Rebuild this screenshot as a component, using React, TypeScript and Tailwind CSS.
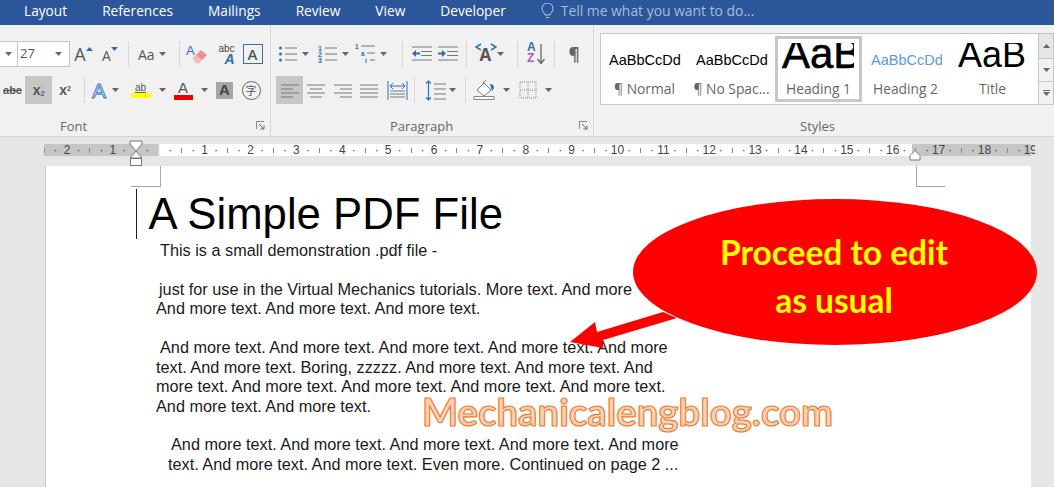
import type { ReactNode } from "react";

const tabs = ["Layout", "References", "Mailings", "Review", "View", "Developer"];

const ui = "font-['Open_Sans',sans-serif]";
const blue = "#2f6fb0";

const Sep = () => <div className="w-px h-[26px] bg-[#d6d6d6] shrink-0" />;

const Caret = ({ className = "" }: { className?: string }) => (
  <svg width="7" height="4" viewBox="0 0 7 4" className={`shrink-0 ${className}`}>
    <path d="M0 0h7L3.500 4z" fill="#666" />
  </svg>
);

const Lines = ({ d, w = 20 }: { d: string; w?: number }) => (
  <svg width={w} height="20" viewBox={`0 0 ${w} 20`}>
    <path d={d} stroke="#777" strokeWidth="1" fill="none" />
  </svg>
);

function Btn({ w, children, active }: { w: string; children: ReactNode; active?: boolean }) {
  return (
    <div className={`${w} h-full shrink-0 flex items-center justify-center ${active ? "bg-[#c6c6c6]" : ""}`}>
      {children}
    </div>
  );
}

const Bullets = () => (
  <svg width="20" height="20" viewBox="0 0 20 20">
    <g fill={blue}>
      <circle cx="2.500" cy="4" r="1.500" />
      <circle cx="2.500" cy="10" r="1.500" />
      <circle cx="2.500" cy="16" r="1.500" />
    </g>
    <path d="M7 4h12M7 10h12M7 16h12" stroke="#777" />
  </svg>
);

const Numbered = () => (
  <svg width="20" height="20" viewBox="0 0 20 20">
    <g fill={blue} fontSize="7" fontWeight="700" fontFamily="'Liberation Sans',sans-serif">
      <text x="0" y="7">1</text>
      <text x="0" y="13">2</text>
      <text x="0" y="19">3</text>
    </g>
    <path d="M7 4h12M7 10h12M7 16h12" stroke="#777" />
  </svg>
);

const Multi = () => (
  <svg width="24" height="22" viewBox="0 0 24 22">
    <g fill={blue} fontSize="6.500" fontWeight="700" fontFamily="'Liberation Sans',sans-serif">
      <text x="0" y="6">1</text>
      <text x="6" y="13">a</text>
      <text x="10" y="20">i</text>
    </g>
    <path d="M6 3h14M12 10h8M15 17h5" stroke="#777" />
  </svg>
);

const Indent = ({ flip }: { flip?: boolean }) => (
  <svg width="20" height="20" viewBox="0 0 20 20">
    <path d="M0 3h20M9 7.500h11M9 11.500h11M0 16h20" stroke="#777" />
    <path
      d={flip ? "M0 8.500h4V6l4 3.500-4 3.500v-2.500H0z" : "M8 8.500H4V6L0 9.500 4 13v-2.500h4z"}
      fill={blue}
    />
  </svg>
);

const Sort = () => (
  <div className="relative w-[18px] h-[22px]">
    <span className="absolute left-0 top-[-3px] text-[12px] font-bold leading-[14px] text-[#2f6fb0] font-['Liberation_Sans',sans-serif]">A</span>
    <span className="absolute left-0 top-[8px] text-[12px] font-bold leading-[14px] text-[#a05fb0] font-['Liberation_Sans',sans-serif]">Z</span>
    <svg width="8" height="20" viewBox="0 0 8 20" className="absolute right-0 top-[1px]">
      <path d="M4 0v19M0.500 15L4 19.500 7.500 15" stroke="#666" strokeWidth="1.300" fill="none" />
    </svg>
  </div>
);

const Eraser = () => (
  <svg width="22" height="22" viewBox="0 0 22 22">
    <text x="0" y="12" fontSize="13" fontFamily="'Liberation Sans',sans-serif" fill={blue}>A</text>
    <path d="M7 15l8-8 6 5-8 8h-3z" fill="#ee8d99" />
    <path d="M7 15l3-3 6 5-3 3h-3z" fill="#f6b8c0" />
  </svg>
);

const Shading = () => (
  <svg width="26" height="22" viewBox="0 0 26 22">
    <path d="M4 11l7-7 7 7-7 6z" fill="#fff" stroke="#777" />
    <path d="M10 4l3-3" stroke="#777" />
    <path d="M17 5c3 0 4 2 4 4l-2 3-1-3z" fill={blue} />
    <rect x="1" y="17.500" width="20" height="3" fill="#fff" stroke="#888" />
  </svg>
);

const Borders = () => (
  <svg width="18" height="18" viewBox="0 0 18 18">
    <path d="M1 1h16v16H1zM9 1v16M1 9h16" stroke="#888" strokeDasharray="1 1" fill="none" />
  </svg>
);

const styleItems = [
  { label: "¶ Normal", sample: "AaBbCcDd", cls: "w-[77px] pl-[5px] text-[14.500px] leading-[20px] text-black" },
  { label: "¶ No Spac...", sample: "AaBbCcDd", cls: "w-[77px] pl-[5px] text-[14.500px] leading-[20px] text-black" },
  { label: "Heading 1", sample: "AaBb", cls: "w-[76px] pl-[4px] text-[42px] leading-[33px] text-black [-webkit-text-stroke:0.600px_#000]", on: true },
  { label: "Heading 2", sample: "AaBbCcDd", cls: "w-[77px] pl-[6px] text-[14.500px] leading-[20px] text-[#5b9bd5]" },
  { label: "Title", sample: "AaB", cls: "pl-[6px] text-[36px] leading-[30px] text-black" },
];

const Launcher = () => (
  <svg width="9" height="9" viewBox="0 0 9 9" className="shrink-0">
    <path d="M0.500 8V0.500H8" stroke="#888" fill="none" />
    <path d="M3 3l5 5M8 4.500V8H4.500" stroke="#666" fill="none" />
  </svg>
);

const GroupLabel = ({ text, launch, className = "" }: { text: string; launch?: boolean; className?: string }) => (
  <div className={`relative h-[20px] mt-auto -mb-px flex items-center text-[13px] text-[#666] ${className}`}>
    {text}
    {launch && (
      <span className="absolute right-[5px] top-[4px]">
        <Launcher />
      </span>
    )}
  </div>
);

// one slot for each quarter centimetre of the ruler
const rulerMarks: string[] = ["|", "·"];
for (let n = -2; n <= 18; n++) {
  rulerMarks.push(n === 0 ? "" : String(Math.abs(n)), "·", "|", "·");
}
rulerMarks.push("19");

function Ruler() {
  return (
    <div className="h-[29px] bg-[#e6e6e6] pt-[7px] pl-[44px] pr-[19px] relative">
      <div className="h-[12px] overflow-hidden flex items-center bg-[linear-gradient(to_right,#c6c6c6_114px,#ffffff_116px,#ffffff_868px,#c6c6c6_868px,#c6c6c6_987px,transparent_987px)] text-[12px] text-[#444] font-['Liberation_Sans',sans-serif]">
        <div className="flex -ml-[5.700px] shrink-0">
          {rulerMarks.map((m, i) => (
            <span key={i} className="w-[11.475px] shrink-0 text-center leading-[12px] whitespace-nowrap flex justify-center">
              {m === "|" ? <span className="w-px h-[5px] mt-[4px] bg-[#888]" /> : m}
            </span>
          ))}
        </div>
      </div>
      {/* indent markers */}
      <svg width="14" height="27" viewBox="0 0 14 27" className="absolute left-[129px] top-[3px]">
        <path d="M1 1h12v3L7 11 1 4zM7 11l6 7H1z" fill="#fff" stroke="#777" />
        <rect x="1.500" y="18.500" width="11" height="7" fill="#fff" stroke="#777" />
      </svg>
      <svg width="12" height="11" viewBox="0 0 12 11" className="absolute left-[909px] top-[13px]">
        <path d="M6 .5l5 5v4.500H1V5.500z" fill="#fff" stroke="#777" />
      </svg>
    </div>
  );
}

export default function App() {
  return (
    <div className="w-[1054px] h-[487px] overflow-hidden relative bg-[#e6e6e6]">
      {/* Title bar tabs */}
      <div className={`${ui} h-[25px] bg-[#2b579a] flex items-center pl-[24px] pb-[2px] gap-[35px] text-[13.700px] text-white`}>
        {tabs.map((t) => (
          <span key={t}>{t}</span>
        ))}
        <span className="flex items-center gap-[7px] text-[#a9bcd8] text-[13.900px]">
          <svg width="13" height="17" viewBox="0 0 13 17" fill="none" stroke="#c4d2e6">
            <path d="M4 12c0-2-3-3-3-6.500a5.500 5.500 0 0 1 11 0C12 9 9 10 9 12zM5 14.500h3" />
          </svg>
          Tell me what you want to do...
        </span>
      </div>

      {/* Ribbon */}
      <div className={`${ui} h-[112px] bg-[#f1f1f1] border-b border-[#d4d4d4] flex`}>
        {/* Font */}
        <div className="w-[271px] shrink-0 border-r border-[#d6d6d6] flex flex-col pt-[16px]">
          <div className="flex items-center h-[26px] text-[#555]">
            <div className="w-[18px] h-full bg-white border-y border-r border-[#c6c6c6] flex items-center justify-center">
              <Caret />
            </div>
            <div className="w-[52px] h-full bg-white border-y border-r border-[#c6c6c6] flex items-center justify-between pl-[2px] pr-[7px] text-[13px]">
              27
              <Caret />
            </div>
            <Btn w="w-[27px]">
              <span className="text-[18px] leading-none">A</span>
              <svg width="7" height="5" viewBox="0 0 7 5" className="mb-[10px]"><path d="M0 4L3.500 0 7 4z" fill={blue} /></svg>
            </Btn>
            <Btn w="w-[26px]">
              <span className="text-[14px] leading-none mt-[3px]">A</span>
              <svg width="7" height="5" viewBox="0 0 7 5" className="mb-[10px]"><path d="M0 0l3.500 4L7 0z" fill={blue} /></svg>
            </Btn>
            <div className="w-[5px]" />
            <Sep />
            <div className="w-[50px] h-full flex items-center pl-[9px]">
              <span className="text-[14px] mr-[4px]">Aa</span>
              <Caret />
            </div>
            <Sep />
            <Btn w="w-[34px]"><Eraser /></Btn>
            <Btn w="w-[25px]">
              <div className="flex flex-col items-end leading-[11px] font-['Liberation_Sans',sans-serif]">
                <span className="text-[10px] text-[#444]">abc</span>
                <span className="text-[14px] font-bold italic text-[#2f6fb0]">A</span>
              </div>
            </Btn>
            <Btn w="w-[27px]">
              <span className="w-[20px] h-[20px] border-[1.500px] border-[#3a6ea5] flex items-center justify-center text-[15px] font-semibold leading-none">A</span>
            </Btn>
          </div>
          <div className="flex items-center h-[28px] mt-[9px] text-[#555] font-['Liberation_Sans',sans-serif]">
            <Btn w="w-[25px]"><span className="text-[11px] font-bold line-through">abc</span></Btn>
            <Btn w="w-[27px]" active>
              <span className="text-[14px] font-bold">x<sub className="text-[7px] text-[#2f6fb0]">2</sub></span>
            </Btn>
            <Btn w="w-[26px]">
              <span className="text-[14px] font-bold">x<sup className="text-[7px]">2</sup></span>
            </Btn>
            <div className="w-[6px]" />
            <Sep />
            <Btn w="w-[41px]">
              <span className="text-[21px] leading-none text-[#dceaf7] [-webkit-text-stroke:1px_#3f7fc1] mr-[6px]">A</span>
              <Caret />
            </Btn>
            <Btn w="w-[44px]">
              <div className="flex flex-col items-center mr-[8px] w-[20px]">
                <span className="text-[10px] leading-[11px] underline decoration-[#666]">ab</span>
                <span className="w-[20px] h-[5px] bg-[#ffff00]" />
              </div>
              <Caret />
            </Btn>
            <Btn w="w-[41px]">
              <div className="flex flex-col items-center mr-[8px] w-[19px]">
                <span className="text-[15px] leading-[14px]">A</span>
                <span className="w-[19px] h-[5px] bg-[#ee0000]" />
              </div>
              <Caret />
            </Btn>
            <Btn w="w-[27px]">
              <span className="w-[17px] h-[17px] bg-[#a6a6a6] flex items-center justify-center text-[15px] font-bold text-[#444]">A</span>
            </Btn>
            <Btn w="w-[26px]">
              <span className="w-[19px] h-[19px] rounded-full border border-[#666] flex items-center justify-center text-[11px] font-['Noto_Sans_CJK_SC',sans-serif]">字</span>
            </Btn>
          </div>
          <GroupLabel text="Font" launch className="pl-[60px]" />
        </div>

        {/* Paragraph */}
        <div className="w-[323px] shrink-0 border-r border-[#d6d6d6] flex flex-col pt-[16px]">
          <div className="flex items-center h-[26px]">
            <Btn w="w-[44px]">
              <Bullets />
              <Caret className="ml-[4px]" />
            </Btn>
            <Btn w="w-[36px]">
              <Numbered />
              <Caret className="ml-[4px]" />
            </Btn>
            <Btn w="w-[40px]">
              <Multi />
              <Caret className="ml-[1px]" />
            </Btn>
            <div className="w-[12px]" />
            <Sep />
            <div className="w-[5px]" />
            <Btn w="w-[27px]"><Indent /></Btn>
            <Btn w="w-[26px]"><Indent flip /></Btn>
            <div className="w-[5px]" />
            <Sep />
            <Btn w="w-[50px]">
              <span className="relative text-[17px] font-bold text-[#555] leading-none mr-[3px]">
                A
                <svg width="22" height="8" viewBox="0 0 22 8" className="absolute left-[-5px] top-[-3px]">
                  <path d="M6 1L1 4l5 3M16 1l5 3-5 3" stroke={blue} strokeWidth="1.500" fill="none" />
                </svg>
              </span>
              <Caret className="ml-[3px]" />
            </Btn>
            <Sep />
            <Btn w="w-[36px]"><Sort /></Btn>
            <Sep />
            <Btn w="w-[38px]">
              <span className="text-[17px] font-bold text-[#666] leading-none">¶</span>
            </Btn>
          </div>
          <div className="flex items-center h-[28px] mt-[9px]">
            <div className="w-[5px]" />
            <Btn w="w-[27px]" active><Lines d="M1 5h18M1 9h12M1 13h18M1 17h12" /></Btn>
            <Btn w="w-[26px]"><Lines d="M1 5h18M4 9h12M1 13h18M4 17h12" /></Btn>
            <Btn w="w-[27px]"><Lines d="M1 5h18M7 9h12M1 13h18M7 17h12" /></Btn>
            <Btn w="w-[26px]"><Lines d="M1 5h18M1 9h18M1 13h18M1 17h18" /></Btn>
            <Btn w="w-[30px]">
              <svg width="21" height="21" viewBox="0 0 21 21">
                <path d="M1 1v19M20 1v19" stroke={blue} />
                <path d="M3 6h15M3 6l3-3M3 6l3 3M18 6l-3-3M18 6l-3 3" stroke={blue} fill="none" />
                <path d="M3 11h15M3 14h15M3 17h15" stroke="#777" />
              </svg>
            </Btn>
            <div className="w-[2px]" />
            <Sep />
            <Btn w="w-[50px]">
              <svg width="21" height="21" viewBox="0 0 21 21">
                <path d="M3.500 1v19M1 3.500L3.500 1 6 3.500M1 17.500L3.500 20 6 17.500" stroke={blue} strokeWidth="1.200" fill="none" />
                <path d="M9 4h12M9 9h12M9 14h12M9 19h12" stroke="#777" />
              </svg>
              <Caret className="ml-[3px]" />
            </Btn>
            <Sep />
            <Btn w="w-[50px]">
              <Shading />
              <Caret className="ml-[4px]" />
            </Btn>
            <Btn w="w-[38px]">
              <Borders />
              <Caret className="ml-[8px]" />
            </Btn>
          </div>
          <GroupLabel text="Paragraph" launch className="pl-[119px]" />
        </div>

        {/* Styles */}
        <div className="flex-1 flex flex-col pt-[8px] pl-[6px] min-w-0">
          <div className="h-[72px] flex">
            <div className="w-[439px] shrink-0 bg-white border border-[#c6c6c6] flex items-center">
              {styleItems.map((s) => (
                <div
                  key={s.label}
                  className={`w-[87px] h-[66px] shrink-0 flex flex-col border-[3px] ${s.on ? "border-[#c6c6c6]" : "border-transparent"}`}
                >
                  <div className={`h-[27px] mt-[4px] overflow-hidden flex items-end whitespace-nowrap font-['Liberation_Sans',sans-serif] ${s.cls}`}>
                    {s.sample}
                  </div>
                  <div className="mt-[10px] text-center text-[13.800px] leading-[18px] text-[#666] whitespace-nowrap">{s.label}</div>
                </div>
              ))}
            </div>
            <div className="flex-1 flex flex-col border-y border-r border-[#c6c6c6]">
              <div className="h-[25px] bg-[#e6e6e6] flex items-center justify-center border-b border-[#c6c6c6]">
                <Caret className="rotate-180" />
              </div>
              <div className="h-[23px] flex items-center justify-center border-b border-[#c6c6c6]">
                <Caret />
              </div>
              <div className="flex-1 flex flex-col items-center justify-center gap-[1px]">
                <span className="w-[7px] h-px bg-[#666]" />
                <Caret />
              </div>
            </div>
          </div>
          <GroupLabel text="Styles" className="pl-[200px]" />
        </div>
      </div>

      <Ruler />

      {/* Page */}
      <div className="relative ml-[45px] w-[986px] h-[321px] bg-white border-l border-[#c6c6c6] font-['Liberation_Sans',sans-serif] text-[16.250px] leading-[19.500px] text-[#1a1a1a]">
        <div className="absolute left-[85px] top-0 w-[30px] h-[21px] border-r border-b border-[#a6a6a6]" />
        <div className="absolute left-[870px] top-0 w-[29px] h-[21px] border-l border-b border-[#a6a6a6]" />

        <div className="pt-[22px] pl-[89.500px] flex items-start">
          <div className="w-px h-[50px] bg-[#222] mr-[12px] mt-[1px]" />
          <h1 className="text-[43.700px] leading-[52px] text-black">A Simple PDF File</h1>
        </div>
        <div className="whitespace-nowrap">
          <p className="ml-[114px] mt-[1px]">This is a small demonstration .pdf file -</p>
          <p className="ml-[113px] mt-[19px]">just for use in the Virtual Mechanics tutorials. More text. And more</p>
          <p className="ml-[110px]">And more text. And more text. And more text.</p>
          <p className="ml-[114px] mt-[19.500px]">And more text. And more text. And more text. And more text. And more</p>
          <p className="ml-[110px]">text. And more text. Boring, zzzzz. And more text. And more text. And</p>
          <p className="ml-[110px]">more text. And more text. And more text. And more text. And more text.</p>
          <p className="ml-[110px]">And more text. And more text.</p>
          <p className="ml-[125px] mt-[19px]">And more text. And more text. And more text. And more text. And more</p>
          <p className="ml-[122px]">text. And more text. And more text. Even more. Continued on page 2 ...</p>
        </div>
      </div>

      {/* Callout drawn over the page */}
      <svg width="1054" height="487" viewBox="0 0 1054 487" className="absolute left-0 top-0 pointer-events-none">
        <ellipse cx="835" cy="272" rx="202" ry="73" fill="#ff0000" />
        <path d="M570 342L595 322 597 332 663 312 677 318 603 340 603 348z" fill="#ff0000" />
      </svg>
      <div className="absolute left-[634px] top-[228px] w-[400px] text-center font-['Lato',sans-serif] font-bold text-[33.500px] leading-[48px] text-[#ffff00]">
        <div>Proceed to edit</div>
        <div>as usual</div>
      </div>
      <div className="absolute left-[422px] top-[388px] font-['Lato',sans-serif] font-bold text-[38.300px] leading-[46px] text-[#f9d2b5] [-webkit-text-stroke:1.200px_#ed7d31] whitespace-nowrap">
        Mechanicalengblog.com
      </div>
    </div>
  );
}
